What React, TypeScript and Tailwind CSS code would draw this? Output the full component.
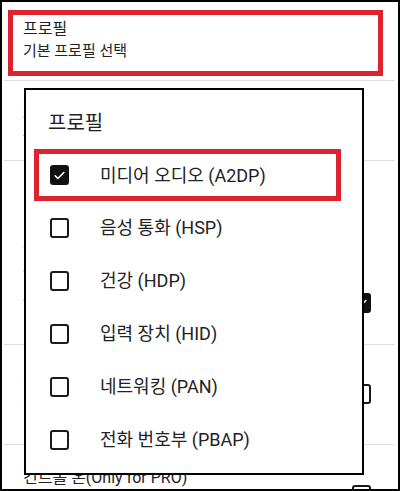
import React from "react";

const FONT = { fontFamily: "Roboto, 'Noto Sans CJK KR', sans-serif" };

function CheckedBox() {
  return (
    <div className="w-[19px] h-[20px] rounded-[3px] bg-[#111] flex items-center justify-center shrink-0">
      <svg width="13" height="13" viewBox="0 0 24 24" fill="none">
        <path d="M4 12.5l5 5L20 6.5" stroke="#fff" strokeWidth="3" strokeLinecap="round" strokeLinejoin="round" />
      </svg>
    </div>
  );
}

function EmptyBox() {
  return <div className="w-[19px] h-[20px] rounded-[3px] border-2 border-[#1a1a1a] shrink-0" />;
}

const rows = ["음성 통화 (HSP)", "건강 (HDP)", "입력 장치 (HID)", "네트워킹 (PAN)", "전화 번호부 (PBAP)"];

export default function App() {
  return (
    <div
      className="w-[400px] h-[491px] border-2 border-black bg-white relative overflow-hidden text-[#222]"
      style={FONT}
    >
      {/* background list */}
      <div className="flex flex-col">
        <div className="pt-[8px] pb-[4px]">
          <div className="ml-[6px] w-[375px] h-[66px] border-[5px] border-[#dc2430] pl-[10px] pt-[3px]">
            <div className="text-[16px] leading-[22px]">프로필</div>
            <div className="text-[15px] leading-[22px]">기본 프로필 선택</div>
          </div>
        </div>
        <div className="ml-[2px] mr-[3px] h-[1px] bg-[#dedede]" />
        <div className="h-[79px] pl-[21px] pt-[22px]">
          <div className="text-[16px] leading-[22px]">자동 연결</div>
          <div className="text-[15px] leading-[22px]">블루투스 기기 자동 연결</div>
        </div>
        <div className="ml-[2px] mr-[3px] h-[1px] bg-[#dedede]" />
        <div className="h-[183px] pl-[21px] pr-[27px] flex justify-between">
          <div className="pt-[80px]">
            <div className="text-[16px] leading-[22px]">알림 표시</div>
            <div className="text-[15px] leading-[22px]">연결 상태 알림</div>
            <div className="text-[15px] leading-[22px]">표시하기</div>
          </div>
          <div className="mt-[132px]">
            <CheckedBox />
          </div>
        </div>
        <div className="ml-[2px] mr-[3px] h-[1px] bg-[#dedede]" />
        <div className="h-[99px] pl-[21px] pr-[27px] flex justify-between">
          <div className="pt-[26px]">
            <div className="text-[16px] leading-[22px]">배터리 표시</div>
            <div className="text-[15px] leading-[22px]">기기 배터리 잔량</div>
          </div>
          <div className="mt-[39px]">
            <EmptyBox />
          </div>
        </div>
        <div className="ml-[2px] mr-[3px] h-[1px] bg-[#dedede]" />
        <div className="h-[60px] pl-[21px] pr-[27px] flex justify-between">
          <div className="pt-[22px] text-[16px] leading-[22px]">컨트롤 온(Only for PRO)</div>
          <div className="mt-[40px]">
            <EmptyBox />
          </div>
        </div>
      </div>

      {/* dialog */}
      <div className="absolute left-[22px] top-[86px] w-[340px] h-[387px] border-2 border-black bg-white flex flex-col">
        <div className="pt-[19px] pl-[22px] h-[47px] text-[20px] leading-[28px] text-[#222]">프로필</div>
        <div className="mt-[12px] ml-[8px] w-[307px] h-[52px] border-[5px] border-[#dc2430] flex items-center pl-[11px]">
          <CheckedBox />
          <span className="ml-[31px] text-[18px] text-[#222]">미디어 오디오 (A2DP)</span>
        </div>
        {rows.map((r) => (
          <div key={r} className="h-[53px] flex items-center pl-[24px]">
            <EmptyBox />
            <span className="ml-[31px] text-[18px] text-[#222]">{r}</span>
          </div>
        ))}
      </div>
    </div>
  );
}
